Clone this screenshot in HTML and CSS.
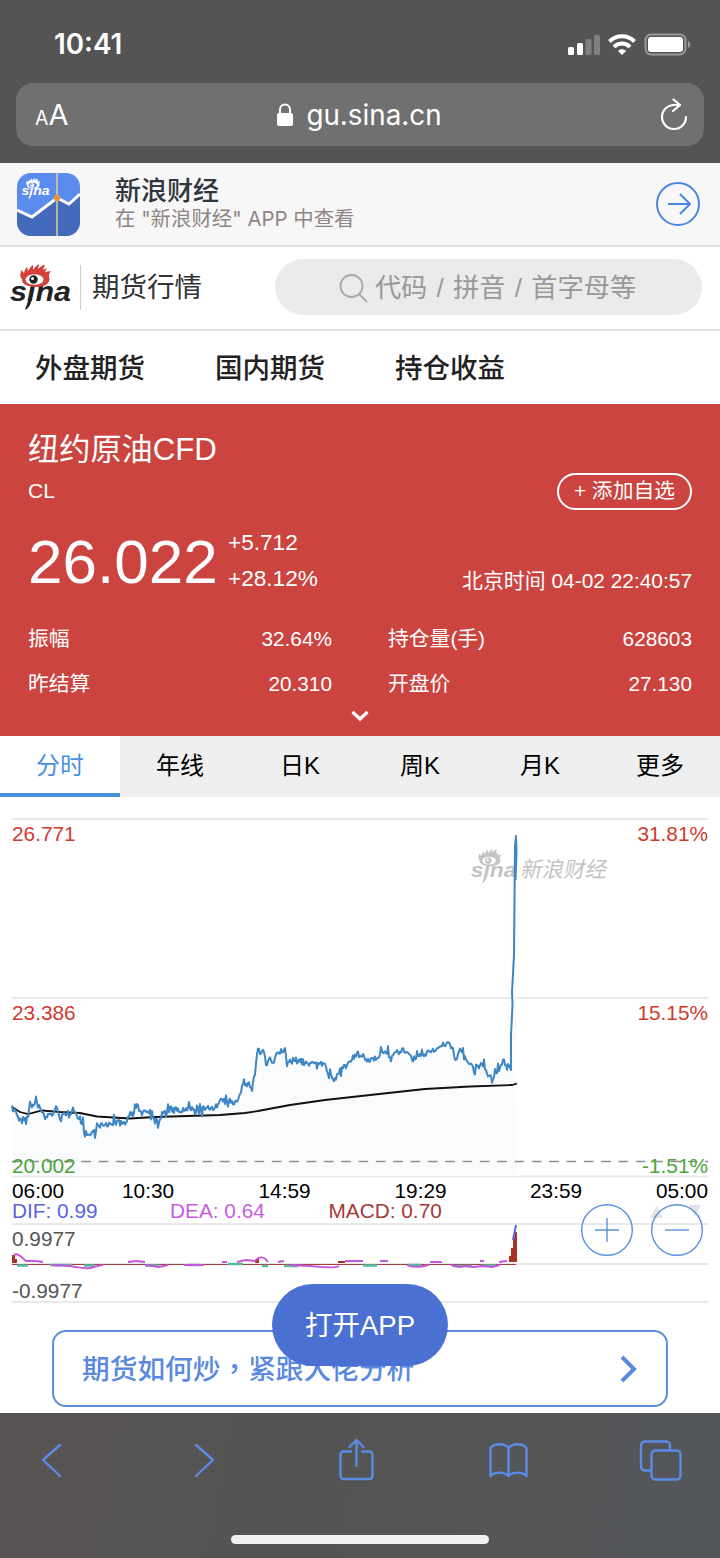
FILE: index.html
```html
<!DOCTYPE html>
<html lang="zh-CN">
<head>
  <meta charset="UTF-8">
  <title>纽约原油CFD - 新浪财经</title>
  <link rel="stylesheet" href="styles.css">
</head>

<body>
  <div class="phone">
    <div class="browser-top">
      <div class="status">
        <span class="clock">10:41</span>
        <svg class="status-icons" width="124" height="24" viewBox="0 0 124 24">
          <g fill="#fff">
            <rect x="0" y="15" width="6" height="8" rx="1.500"/>
            <rect x="9" y="11" width="6" height="12" rx="1.500"/>
            <rect x="17.500" y="7" width="6" height="16" rx="1.500" opacity=".25"/>
            <rect x="26" y="3" width="6" height="20" rx="1.500" opacity=".25"/>
          </g>
          <g fill="none" stroke="#fff" stroke-width="4">
            <path d="M41.500 9.500a17.500 17.500 0 0 1 25 0"/>
            <path d="M46 15a11 11 0 0 1 16 0"/>
          </g>
          <path d="M50 19c2-2.500 6-2.500 8 0l-4 4z" fill="#fff"/>
          <rect x="77.500" y="2.500" width="40" height="20" rx="5.500" fill="none" stroke="#999" stroke-width="2"/>
          <rect x="80" y="5" width="35" height="15" rx="3" fill="#fff"/>
          <path d="M120 9c3 1 3 6 0 7z" fill="#999"/>
        </svg>
      </div>
      <div class="address">
        <div class="text-size"><span>A</span>A</div>
        <div class="url">
          <svg width="18" height="24" viewBox="0 0 18 24">
            <path d="M4 11V6.500a5 5 0 0 1 10 0V11" fill="none" stroke="#fff" stroke-width="2"/>
            <rect x="1" y="10" width="16" height="13" rx="2" fill="#fff"/>
          </svg>
          gu.sina.cn
        </div>
        <svg class="reload" width="30" height="34" viewBox="0 0 30 34" fill="none" stroke="#fff" stroke-width="2.200" stroke-linecap="round" stroke-linejoin="round">
          <path d="M27 19a12 12 0 1 1-12-12h6"/>
          <path d="M14.500 1.500l6.500 5.500-7 6"/>
        </svg>
      </div>
    </div>

    <div class="banner">
      <svg class="app-icon" width="63" height="63" viewBox="0 0 63 63">
        <rect width="63" height="63" fill="#5b8bef"/>
        <path d="M0 37l15 8 25-20 12 8 11-10v40H0z" fill="#446abb"/>
        <path d="M0 37l15 7 25-19 12 6 11-10" fill="none" stroke="#fff" stroke-width="3"/>
        <path d="M40 0v63" stroke="#d9c99a" stroke-width="1.600"/>
        <circle cx="40" cy="25" r="3.200" fill="#e8963a"/>
        <use class="sina-white" href="#sina" transform="translate(4 5) scale(.46)"/>
      </svg>
      <div class="banner-text">
        <strong>新浪财经</strong>
        <span>在 "新浪财经" APP 中查看</span>
      </div>
      <svg width="44" height="44" viewBox="0 0 44 44" fill="none" stroke="#4a86df" stroke-width="2">
        <circle cx="22" cy="22" r="21"/>
        <path d="M12 22h21M24 12l10 10-10 10" stroke-linejoin="round"/>
      </svg>
    </div>

    <header class="header">
      <svg class="logo" width="64" height="46" viewBox="0 0 64 46">
        <g id="sina">
          <text class="sina-text" x="1" y="37" textLength="61" lengthAdjust="spacingAndGlyphs">sina</text>
          <path class="sina-tail" d="M20 34l-4 12c4-2 6-6 7-12z"/>
          <path class="sina-bg" d="M11 12h30v9.500H11z"/>
          <path class="sina-eye" d="M13 15c-3-3-1-6-1-9l3 3c1-3 1-4 3-6l1 4c2-3 3-5 5-6v5c2-3 4-5 6-6l-1 5c2-2 5-4 7-4l-2 5 4-2-2 4 6-1c-2 2-2 4-2 6 2 5-3 10-12 10S12 20 13 15z"/>
          <ellipse class="sina-bg" cx="25.500" cy="15.500" rx="9" ry="5.300"/>
          <circle class="sina-pupil" cx="24.500" cy="15.500" r="4.200"/>
          <circle class="sina-bg" cx="23.500" cy="14.500" r="1.500"/>
        </g>
      </svg>
      <h1>期货行情</h1>
      <div class="search">
        <svg width="30" height="30" viewBox="0 0 30 30" fill="none" stroke="#a8a8a8" stroke-width="1.800">
          <circle cx="12.500" cy="13" r="11"/>
          <path d="M20 21l8 8"/>
        </svg>
        <span>代码 / 拼音 / 首字母等</span>
      </div>
    </header>

    <nav class="menu">
      <a>外盘期货</a>
      <a>国内期货</a>
      <a>持仓收益</a>
    </nav>

    <section class="quote">
      <h2>纽约原油CFD</h2>
      <div class="code-row">
        <span>CL</span>
        <button class="add">+ 添加自选</button>
      </div>
      <div class="price-row">
        <span class="price">26.022</span>
        <div class="change">
          <span>+5.712</span>
          <span>+28.12%</span>
        </div>
        <span class="time">北京时间 04-02 22:40:57</span>
      </div>
      <dl class="stats">
        <div><dt>振幅</dt><dd>32.64%</dd></div>
        <div><dt>持仓量(手)</dt><dd>628603</dd></div>
        <div><dt>昨结算</dt><dd>20.310</dd></div>
        <div><dt>开盘价</dt><dd>27.130</dd></div>
      </dl>
      <svg class="more" width="20" height="12" viewBox="0 0 20 12"><path d="M2.500 2l7.500 7 7.500-7" fill="none" stroke="#fff" stroke-width="3.200"/></svg>
    </section>

    <div class="tabs">
      <span class="active">分时</span>
      <span>年线</span>
      <span>日K</span>
      <span>周K</span>
      <span>月K</span>
      <span>更多</span>
    </div>

    <div class="chart">
      <svg width="720" height="506" viewBox="0 797 720 506">
        <g class="watermark">
          <use class="sina-grey" href="#sina" transform="translate(470 849) scale(.75)"/>
          <text x="0" y="0" transform="translate(520 877) skewX(-12)">新浪财经</text>
        </g>
        <path class="grid" d="M12 819H708M12 998H708M12 1176.500H708M12 1224H708M12 1264H708M12 1302H708"/>
        <path id="area" class="area"/>
        <path class="dash" d="M12 1161.500H708"/>
        <path id="average" class="average"/>
        <path id="price" class="line"/>

        <g class="red">
          <text x="12" y="841">26.771</text>
          <text x="12" y="1020">23.386</text>
          <text class="end" x="708" y="841">31.81%</text>
          <text class="end" x="708" y="1020">15.15%</text>
        </g>
        <g class="green">
          <text x="12" y="1173">20.002</text>
          <text class="end" x="708" y="1173">-1.51%</text>
        </g>
        <g class="black">
          <text x="12" y="1197.500">06:00</text>
          <text x="122" y="1197.500">10:30</text>
          <text x="258.500" y="1197.500">14:59</text>
          <text x="394.500" y="1197.500">19:29</text>
          <text x="530" y="1197.500">23:59</text>
          <text class="end" x="708" y="1197.500">05:00</text>
        </g>
        <text class="dif" x="12" y="1218">DIF: 0.99</text>
        <text class="dea" x="170" y="1218">DEA: 0.64</text>
        <text class="macd" x="328.500" y="1218">MACD: 0.70</text>
        <g class="scale">
          <text x="12" y="1246">0.9977</text>
          <text x="12" y="1298">-0.9977</text>
        </g>

        <!-- MACD -->
        <path d="M12 1264.500H516" stroke="#a04040" stroke-width="1.200"/>
        <path d="M12 1255h3v4h2v4h-5zM256 1259h3v4h-4zM338 1261h7v2h-7zM509 1262v-6h2v-8h2v-11h2v-5h2v30z" fill="#a93226"/>
        <path class="macd-green" d="M17 1265.500h11M50 1265h22M84 1265.500h11M145 1265.500h14M188 1265h12M228 1264h15M262 1266h6M284 1266h14M363 1265.500h14M408 1265h13M453 1266h19M481 1265.500h15"/>
        <path class="macd-purple" d="M14 1255c4-3 8 3 12 6h10l7 1M52 1265c6 1 12 0 18 1 8 1 14 3 20 2 5-1 8-3 13-3M128 1262l8-1 9 1M145 1265l14 2 9-2M184 1265h20M222 1262h5M237 1262l9-2 9 1c4-5 9-5 13 1M278 1262l6-1M290 1265l20 1c12 1 24 3 29 0M345 1261h18M380 1261h8M407 1265c6 3 14 2 22 0M430 1262h12M451 1265l8 2 6-1 9 1 8-1 10 1 8-2M480 1261h4M499 1262l8-1"/>
        <path d="M513 1240l3-15" stroke="#5b62e8" stroke-width="2"/>
        <path d="M650 1218l7-13 6 13zM689 1205h12l-6 12z" fill="#e3e3e8"/>
      </svg>
      <div class="zoom-buttons">
        <svg width="52" height="52" viewBox="0 0 52 52"><circle cx="26" cy="26" r="25.300"/><path d="M14 26h24M26 14v24"/></svg>
        <svg width="52" height="52" viewBox="0 0 52 52"><circle cx="26" cy="26" r="25.300"/><path d="M14 26h24"/></svg>
      </div>
    </div>

    <div class="promo-wrap">
      <a class="promo">
        <span>期货如何炒<i lang="zh-TW">，</i>紧跟大佬分析</span>
        <svg width="18" height="28" viewBox="0 0 18 28"><path d="M2 2l12 12L2 26" fill="none" stroke="#5a8ae0" stroke-width="4"/></svg>
      </a>
      <button class="open-app">打开APP</button>
    </div>

    <div class="browser-bottom">
      <div class="toolbar">
        <svg width="44" height="44" viewBox="0 0 44 44"><path d="M30 7L13 22l17 16"/></svg>
        <svg width="44" height="44" viewBox="0 0 44 44"><path d="M14 7l17 15-17 16"/></svg>
        <svg width="44" height="44" viewBox="0 0 44 44"><path d="M17 13.500H9.500a3 3 0 0 0-3 3V38a3 3 0 0 0 3 3h26a3 3 0 0 0 3-3V16.500a3 3 0 0 0-3-3H28M22.500 28V2M15.500 9l7-7 7 7"/></svg>
        <svg width="44" height="44" viewBox="0 0 44 44"><path d="M22.500 37.500V10c-4-5-14-5-18 0v28c4-4.500 14-4.500 18 0 4-4.500 14-4.500 18 0V10c-4-5-14-5-18 0"/></svg>
        <svg width="44" height="44" viewBox="0 0 44 44"><rect x="13.500" y="12.500" width="29" height="29" rx="4"/><path d="M13 32.500H7a4 4 0 0 1-4-4V7.500a4 4 0 0 1 4-4h21a4 4 0 0 1 4 4V12"/></svg>
      </div>
      <div class="home-bar"></div>
    </div>
  </div>

  <script src="chart.js"></script>
</body>
</html>
```
FILE: styles.css
```css
* {
  box-sizing: border-box;
}

body {
  margin: 0;
  background-color: #fff;
  font-family: "Liberation Sans", "Noto Sans CJK SC", sans-serif;
}

h1, h2, dl, dd {
  margin: 0;
  font-weight: normal;
}

svg {
  display: block;
  flex: none;
}

button {
  font-family: inherit;
  padding: 0;
}

.phone {
  width: 720px;
  height: 1558px;
  overflow: hidden;
  display: flex;
  flex-direction: column;
}

.phone > * {
  flex: none;
}

/* sina logo */
.sina-text {
  font: italic bold 28px "Liberation Sans", sans-serif;
  fill: var(--ink, #222);
}

.sina-tail, .sina-pupil {
  fill: var(--ink, #222);
}

.sina-eye {
  fill: var(--eye, #d5403a);
}

.sina-bg {
  fill: var(--bg, #fff);
}

.sina-white {
  --ink: #fff;
  --eye: #fff;
  --bg: #5b8bef;
}

.sina-grey {
  --ink: #c4c4c4;
  --eye: #c4c4c4;
}

/* browser */
.browser-top {
  height: 163px;
  background-color: #545454;
  color: #fff;
  font-family: Inter, sans-serif;
}

.status {
  height: 83px;
  padding: 4px 28px 0 54px;
  display: flex;
  align-items: center;
  justify-content: space-between;
}

.clock {
  font-size: 27.8px;
  font-weight: 600;
}

.address {
  height: 63px;
  margin: 0 16px;
  padding: 0 15px 0 19px;
  border-radius: 17px;
  background-color: #707070;
  display: flex;
  align-items: center;
  justify-content: space-between;
}

.text-size {
  width: 24px;
  font-size: 29px;
  white-space: nowrap;
}

.text-size span {
  font-size: 19.5px;
}

.url {
  display: flex;
  align-items: center;
  gap: 12px;
  font-size: 27.8px;
}

.banner {
  height: 84px;
  padding: 0 20px 0 17px;
  background-color: #f7f7f7;
  border-bottom: 2px solid #e0e0e0;
  display: flex;
  align-items: center;
}

.app-icon {
  border-radius: 14px;
}

.banner-text {
  flex: 1;
  margin-top: -2px;
  margin-left: 35px;
  display: flex;
  flex-direction: column;
  font-family: Inter, "Noto Sans CJK SC", sans-serif;
}

.banner-text strong {
  font-size: 26px;
  line-height: 30px;
  font-weight: 500;
  color: #30363d;
}

.banner-text span {
  font-size: 20.4px;
  line-height: 25px;
  color: #8f8484;
}

/* page header */
.header {
  height: 84px;
  padding: 0 18px 2px 9px;
  border-bottom: 2px solid #e3e3e3;
  display: flex;
  align-items: center;
}

.header h1 {
  margin-left: 7px;
  padding-left: 11px;
  border-left: 1px solid #ccc;
  font-size: 27.5px;
  line-height: 45px;
  color: #333;
}

.search {
  width: 427px;
  height: 56px;
  margin-left: auto;
  border-radius: 28px;
  background-color: #ebebeb;
  display: flex;
  align-items: center;
  justify-content: center;
  gap: 6px;
  padding: 0 2px 2px 0;
  font-size: 26.2px;
  word-spacing: 2px;
  color: #999;
}

.search svg {
  margin-top: 4px;
}

.menu {
  height: 73px;
  padding: 0 0 4px 35px;
  display: flex;
  align-items: center;
  font-size: 27.5px;
  font-weight: 500;
  color: #222;
}

.menu a {
  width: 180px;
}

/* quote */
.quote {
  height: 332px;
  padding: 25px 28px 0;
  background-color: #cb4440;
  color: #fff;
}

.quote h2 {
  font-size: 31.2px;
  line-height: 42px;
}

.code-row {
  height: 38px;
  margin-top: 1px;
  display: flex;
  align-items: center;
  justify-content: space-between;
  font-size: 21px;
}

.add {
  width: 135px;
  height: 37px;
  border: 2px solid #fff;
  border-radius: 19px;
  background: none;
  color: #fff;
  font-size: 20.8px;
  line-height: 30px;
}

.price-row {
  height: 78px;
  margin-top: 12px;
  display: flex;
  align-items: center;
}

.price {
  width: 200px;
  font-size: 62px;
}

.change {
  display: flex;
  flex-direction: column;
  font-size: 22.6px;
  line-height: 36.5px;
}

.time {
  margin-left: auto;
  margin-top: 36px;
  font-size: 20.9px;
}

.stats {
  margin-top: 16px;
  display: grid;
  grid-template-columns: 304px 304px;
  column-gap: 56px;
  font-size: 20.8px;
  line-height: 45px;
}

.stats div {
  display: flex;
  justify-content: space-between;
}

.more {
  margin: 4px auto 0;
}

.tabs {
  height: 61px;
  background-color: #efefef;
  display: grid;
  grid-template-columns: repeat(6, 1fr);
  font-size: 24px;
  line-height: 60px;
  text-align: center;
}

.tabs .active {
  background-color: #fff;
  color: #4a90e2;
  box-shadow: inset 0 -4px #4a90d9;
}

/* chart */
.chart {
  height: 506px;
  position: relative;
}

.chart text {
  font-size: 20.8px;
}

.chart .watermark text {
  font-size: 21.5px;
  fill: #c4c4c4;
}

.end {
  text-anchor: end;
}

.grid {
  stroke: #e9e9e9;
  stroke-width: 2;
}

.dash {
  stroke: #8e8e8e;
  stroke-width: 1.4;
  stroke-dasharray: 9.6 7.73;
}

.area {
  fill: #fafbfd;
}

.average {
  fill: none;
  stroke: #111;
  stroke-width: 1.8;
}

.line {
  fill: none;
  stroke: #3f86c4;
  stroke-width: 2;
  stroke-linejoin: round;
}

.red {
  fill: #d03a2e;
}

.green {
  fill: #4aa53a;
}

.dif {
  fill: #5b62e0;
}

.dea {
  fill: #cb5be0;
}

.macd {
  fill: #a33a35;
}

.scale {
  fill: #555;
}

.macd-green {
  fill: none;
  stroke: #52bda0;
  stroke-width: 2.6;
}

.macd-purple {
  fill: none;
  stroke: #c455dc;
  stroke-width: 1.9;
}

.zoom-buttons {
  position: absolute;
  right: 17px;
  top: 407px;
  display: flex;
  gap: 18px;
  fill: none;
  stroke: #5a92dc;
  stroke-width: 1.4;
}

/* promo */
.promo-wrap {
  height: 110px;
  padding: 27px 52px 0;
  position: relative;
}

.promo {
  height: 77px;
  padding: 0 28px;
  border: 2px solid #5f8fdc;
  border-radius: 14px;
  display: flex;
  align-items: center;
  justify-content: space-between;
  font-size: 27.7px;
  font-weight: 500;
  color: #5a8ae0;
}

.promo span {
  margin-bottom: 4px;
}

.promo i {
  font-family: "Noto Sans CJK TC", sans-serif;
  font-style: normal;
}

.open-app {
  position: absolute;
  left: 272px;
  top: -19px;
  width: 176px;
  height: 82px;
  padding-bottom: 4px;
  border: none;
  border-radius: 41px;
  background-color: #4a70d2;
  color: #fff;
  font-size: 27.5px;
}

.browser-bottom {
  height: 145px;
  background: linear-gradient(100deg, #585453, #545454 45%, #54575a);
}

.toolbar {
  padding: 25px 38px 0 30px;
  display: flex;
  justify-content: space-between;
  fill: none;
  stroke: #5a8ce6;
  stroke-width: 2.4;
  stroke-linecap: round;
  stroke-linejoin: round;
}

.home-bar {
  width: 258px;
  height: 9px;
  margin: 53px auto 0;
  border-radius: 5px;
  background-color: #f0f0f0;
}
```
FILE: chart.js
```js
const precio = [
  [12,1103],[13,1113],[15,1108],[18,1118],[20,1121],[23,1117],[28,1118],[30,1103],[33,1106],[37,1103],
  [40,1109],[45,1117],[50,1115],[57,1110],[62,1116],[70,1115],[73,1105],[76,1115],[80,1119],[84,1127],
  [88,1136],[93,1132],[100,1125],[107,1126],[112,1122],[120,1123],[127,1123],[128,1114],[133,1115],
  [137,1107],[143,1111],[150,1110],[155,1119],[158,1123],[163,1114],[170,1109],[180,1111],[190,1109],
  [200,1111],[210,1108],[217,1106],[222,1100],[228,1104],[236,1102],[240,1092],[243,1085],[246,1084],
  [252,1086],[255,1073],[258,1047],[260,1054],[263,1049],[266,1064],[270,1060],[273,1063],[278,1052],
  [283,1051],[288,1062],[295,1060],[302,1062],[310,1064],[318,1061],[325,1066],[330,1076],[335,1081],
  [342,1066],[348,1065],[354,1057],[360,1053],[366,1061],[375,1058],[382,1051],[390,1055],[400,1052],
  [405,1050],[412,1059],[418,1058],[425,1053],[432,1050],[440,1047],[447,1043],[452,1049],[457,1058],
  [460,1048],[465,1061],[470,1062],[475,1074],[482,1061],[487,1075],[492,1079],[498,1071],[503,1061],
  [508,1065],[510,1063]
];

// final spike
const spike = [[511,1070],[511,1035],[512.5,1005],[512,992],[514,955],[514.5,900],[515,845],[516,836],[516.5,853],[515.5,880]];

const average = [
  [12,1107],[20,1112],[28,1114],[42,1110.5],[60,1112],[80,1113],[97,1116.5],[130,1118.5],[155,1117],
  [220,1115],[245,1113],[258,1111],[290,1105],[325,1100],[370,1095],[425,1089],[470,1086.5],[512,1085],[517,1083.5]
];

// fixed noise, so the line is the same on each load
let seed = 7;
function noise() {
  seed = (seed * 16807) % 2147483647;
  return seed / 2147483647 - 0.5;
}

function toPath(points) {
  return 'M' + points.map(p => p[0].toFixed(1) + ' ' + p[1].toFixed(1)).join('L');
}

const points = [];
for (let i = 0; i < precio.length - 1; i++) {
  const [x1, y1] = precio[i];
  const [x2, y2] = precio[i + 1];
  for (let x = x1; x < x2; x += 1) {
    const y = y1 + (y2 - y1) * (x - x1) / (x2 - x1);
    const size = noise() > 0.35 ? 16 : 6;
    points.push([x, y + noise() * size]);
  }
}
const all = points.concat(spike);

document.getElementById('price').setAttribute('d', toPath(all));
document.getElementById('area').setAttribute('d', toPath(all) + 'L517 1176L12 1176Z');
document.getElementById('average').setAttribute('d', toPath(average));
```
